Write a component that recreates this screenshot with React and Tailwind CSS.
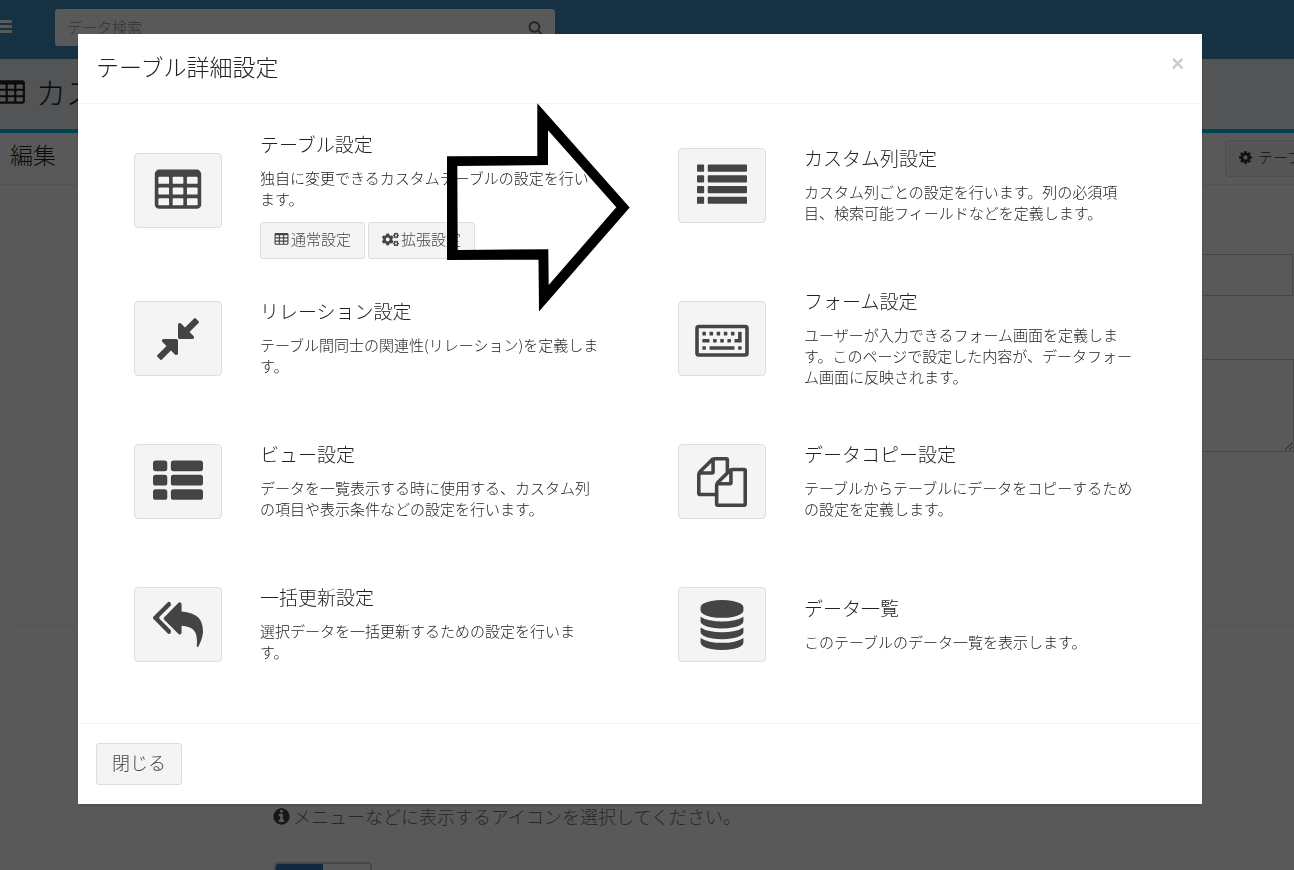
import React from "react";
import { FaCogs } from "react-icons/fa";

const PATHS = {
  compress:
    "M896 960v448q0 26-19 45t-45 19-45-19l-144-144-332 332q-10 10-23 10t-23-10l-114-114q-10-10-10-23t10-23l332-332-144-144q-19-19-19-45t19-45 45-19h448q26 0 45 19t19 45zm755-672q0 13-10 23l-332 332 144 144q19 19 19 45t-19 45-45 19h-448q-26 0-45-19t-19-45v-448q0-26 19-45t45-19 45 19l144 144 332-332q10-10 23-10t23 10l114 114q10 10 10 23z",
  copy: "M1696 384q40 0 68 28t28 68v1216q0 40-28 68t-68 28h-960q-40 0-68-28t-28-68v-288h-544q-40 0-68-28t-28-68v-672q0-40 20-88t48-76l408-408q28-28 76-48t88-20h416q40 0 68 28t28 68v328q68-40 128-40h416zm-544 213l-299 299h299v-299zm-640-384l-299 299h299v-299zm196 647l316-316v-416h-384v416q0 40-28 68t-68 28h-416v640h512v-256q0-40 20-88t48-76zm956 804v-1152h-384v416q0 40-28 68t-68 28h-416v640h896z",
  replyAll:
    "M640 1082v70q0 42-39 59-13 5-25 5-27 0-45-19l-512-512q-19-19-19-45t19-45l512-512q29-31 70-14 39 17 39 59v69l-397 398q-19 19-19 45t19 45zm1152 58q0 58-17 133.5t-38.5 138-48 125-40.5 90.5l-20 40q-8 17-28 17-6 0-9-1-25-8-23-34 43-400-106-565-64-71-170.5-110.5t-267.5-52.5v251q0 42-39 59-13 5-25 5-27 0-45-19l-512-512q-19-19-19-45t19-45l512-512q29-31 70-14 39 17 39 59v262q411 28 599 221 169 173 169 509z",
  database:
    "M896 768q237 0 443-43t325-127v170q0 69-103 128t-280 93.5-385 34.5-385-34.5-280-93.5-103-128v-170q119 84 325 127t443 43zm0 768q237 0 443-43t325-127v170q0 69-103 128t-280 93.5-385 34.5-385-34.5-280-93.5-103-128v-170q119 84 325 127t443 43zm0-384q237 0 443-43t325-127v170q0 69-103 128t-280 93.5-385 34.5-385-34.5-280-93.5-103-128v-170q119 84 325 127t443 43zm0-1152q208 0 385 34.5t280 93.5 103 128v128q0 69-103 128t-280 93.5-385 34.5-385-34.5-280-93.5-103-128v-128q0-69 103-128t280-93.5 385-34.5z",
  cog: "M1152 896q0-106-75-181t-181-75-181 75-75 181 75 181 181 75 181-75 75-181zm512-109v222q0 12-8 23t-20 13l-185 28q-19 54-39 91 35 50 107 138 10 12 10 25t-9 23q-27 37-99 108t-94 71q-12 0-26-9l-138-108q-44 23-91 38-16 136-29 186-7 28-36 28h-222q-14 0-24.5-8.5t-11.5-21.5l-28-184q-49-16-90-37l-141 107q-10 9-25 9-14 0-25-11-126-114-165-168-7-10-7-23 0-12 8-23 15-21 51-66.5t54-70.5q-27-50-41-99l-183-27q-13-2-21-12.5t-8-23.5v-222q0-12 8-23t19-13l186-28q14-46 39-92-40-57-107-138-10-12-10-24 0-10 9-23 26-36 98.5-107.5t94.5-71.5q13 0 26 10l138 107q44-23 91-38 16-136 29-186 7-28 36-28h222q14 0 24.5 8.5t11.5 21.5l28 184q49 16 90 37l142-107q9-9 24-9 13 0 25 10 129 119 165 170 7 8 7 22 0 12-8 23-15 21-51 66.5t-54 70.5q26 50 41 98l183 28q13 2 21 12.5t8 23.5z",
  info: "M1152 1376v-160q0-14-9-23t-23-9h-96v-512q0-14-9-23t-23-9h-320q-14 0-23 9t-9 23v160q0 14 9 23t23 9h96v320h-96q-14 0-23 9t-9 23v160q0 14 9 23t23 9h448q14 0 23-9t9-23zm-128-896v-160q0-14-9-23t-23-9h-192q-14 0-23 9t-9 23v160q0 14 9 23t23 9h192q14 0 23-9t9-23zm640 416q0 209-103 385.5t-279.5 279.5-385.5 103-385.5-103-279.5-279.5-103-385.5 103-385.5 279.5-279.5 385.5-103 385.5 103 279.5 279.5 103 385.5z",
  search:
    "M1216 832q0-185-131.5-316.5t-316.5-131.5-316.5 131.5-131.5 316.5 131.5 316.5 316.5 131.5 316.5-131.5 131.5-316.5zm512 832q0 52-38 90t-90 38q-54 0-90-38l-343-342q-179 124-399 124-143 0-273.5-55.5t-225-150-150-225-55.5-273.5 55.5-273.5 150-225 225-150 273.5-55.5 273.5 55.5 225 150 150 225 55.5 273.5q0 220-124 399l343 343q37 37 37 90z",
};

function Glyph({ name, className }) {
  return (
    <svg viewBox="0 0 1792 1792" fill="currentColor" className={className} aria-hidden="true">
      <path d={PATHS[name]} />
    </svg>
  );
}

const box = (x, y, w, h, r) =>
  `M${x + r} ${y}h${w - 2 * r}a${r} ${r} 0 0 1 ${r} ${r}v${h - 2 * r}a${r} ${r} 0 0 1 ${-r} ${r}h${2 * r - w}a${r} ${r} 0 0 1 ${-r} ${-r}v${2 * r - h}a${r} ${r} 0 0 1 ${r} ${-r}z`;

function TableGlyph({ className }) {
  let d = box(64, 128, 1664, 1408, 160);
  for (const y of [384, 768, 1152]) for (const x of [192, 704, 1216]) d += box(x, y, 384, 256, 32);
  return (
    <svg viewBox="0 0 1792 1792" fill="currentColor" fillRule="evenodd" className={className} aria-hidden="true">
      <path d={d} />
    </svg>
  );
}

function ListGlyph({ className }) {
  return (
    <svg viewBox="0 0 1792 1792" fill="currentColor" className={className} aria-hidden="true">
      <path d={[128, 512, 896, 1280].map((y) => box(0, y, 256, 256, 32) + box(384, y, 1408, 256, 32)).join("")} />
    </svg>
  );
}

function ThListGlyph({ className }) {
  return (
    <svg viewBox="0 0 1792 1792" fill="currentColor" className={className} aria-hidden="true">
      <path d={[128, 640, 1152].map((y) => box(0, y, 512, 384, 96) + box(640, y, 1152, 384, 96)).join("")} />
    </svg>
  );
}

function KeyboardGlyph() {
  const keys =
    [256, 512, 768, 1024, 1280].map((x) => box(x, 640, 128, 128, 16)).join("") +
    box(256, 896, 256, 128, 16) +
    [640, 896, 1152].map((x) => box(x, 896, 128, 128, 16)).join("") +
    box(256, 1152, 128, 128, 16) +
    box(512, 1152, 896, 128, 16) +
    box(1536, 1152, 128, 128, 16) +
    "M1552 640h96a16 16 0 0 1 16 16v352a16 16 0 0 1-16 16h-224a16 16 0 0 1-16-16v-96a16 16 0 0 1 16-16h112v-240a16 16 0 0 1 16-16z";
  return (
    <svg viewBox="0 0 1920 1792" fill="currentColor" className="h-[50px] w-[54px]" aria-hidden="true">
      <path fillRule="evenodd" d={box(0, 384, 1920, 1152, 128) + "M128 512h1664v896h-1664z"} />
      <path d={keys} />
    </svg>
  );
}

const BIG = "size-[50px]";

const ITEMS = [
  {
    title: "テーブル設定",
    text: "独自に変更できるカスタムテーブルの設定を行います。",
    icon: <TableGlyph className={BIG} />,
    iconClass: "mb-[10px]",
    buttons: true,
  },
  {
    title: "カスタム列設定",
    text: "カスタム列ごとの設定を行います。列の必須項目、検索可能フィールドなどを定義します。",
    icon: <ListGlyph className={BIG} />,
    cellClass: "pb-5",
  },
  {
    title: "リレーション設定",
    text: "テーブル間同士の関連性(リレーション)を定義します。",
    icon: <Glyph name="compress" className={BIG} />,
  },
  {
    title: "フォーム設定",
    text: "ユーザーが入力できるフォーム画面を定義します。このページで設定した内容が、データフォーム画面に反映されます。",
    icon: <KeyboardGlyph />,
  },
  {
    title: "ビュー設定",
    text: "データを一覧表示する時に使用する、カスタム列の項目や表示条件などの設定を行います。",
    icon: <ThListGlyph className={BIG} />,
  },
  {
    title: "データコピー設定",
    text: "テーブルからテーブルにデータをコピーするための設定を定義します。",
    icon: <Glyph name="copy" className={BIG} />,
  },
  {
    title: "一括更新設定",
    text: "選択データを一括更新するための設定を行います。",
    icon: <Glyph name="replyAll" className={BIG} />,
  },
  {
    title: "データ一覧",
    text: "このテーブルのデータ一覧を表示します。",
    icon: <Glyph name="database" className={BIG} />,
  },
];

const SMALL_BUTTON =
  "flex h-[37px] items-center gap-0.5 rounded-[3px] border border-[#ddd] bg-[#f4f4f4] px-[13px] pb-0.5 text-[15px] text-[#444]";

function SettingItem({ item }) {
  return (
    <section className={`flex items-center gap-[38px] px-[38px] ${item.cellClass || ""}`}>
      <a
        href="#"
        aria-label={item.title}
        className={`flex h-[75px] w-22 shrink-0 items-center justify-center rounded-[4px] border border-[#ddd] bg-[#f4f4f4] text-[#444] ${item.iconClass || ""}`}
      >
        {item.icon}
      </a>
      <div className={`min-w-0 flex-1 ${item.buttons ? "" : "pb-0.5"}`}>
        <h4 className="mb-[11px] text-[19px] leading-6">{item.title}</h4>
        <p className="text-[15px] leading-[21px]">{item.text}</p>
        {item.buttons && (
          <div className="mt-[13px] flex gap-[3px]">
            <a href="#" className={SMALL_BUTTON}>
              <TableGlyph className="size-[15px]" />
              通常設定
            </a>
            <a href="#" className={SMALL_BUTTON}>
              <FaCogs className="size-[17px]" />
              拡張設定
            </a>
          </div>
        )}
      </div>
    </section>
  );
}

function Page() {
  return (
    <div className="flex h-screen flex-col overflow-hidden bg-white">
      <header className="flex h-[59px] shrink-0 items-start bg-[#3c8dbc] pt-[9px]">
        <button type="button" aria-label="メニュー" className="flex h-9 w-[55px] items-center text-white">
          <svg viewBox="0 0 12 14" className="h-[14px] w-3" fill="currentColor" aria-hidden="true">
            <path d="M0 0h12v3h-12zM0 5h12v3h-12zM0 10h12v3h-12z" />
          </svg>
        </button>
        <form className="flex h-[37px] w-[500px] items-center rounded-[3px] bg-white px-3">
          <input
            type="text"
            aria-label="データ検索"
            placeholder="データ検索"
            className="min-w-0 flex-1 bg-transparent text-[15px] outline-none placeholder:text-[#999]"
          />
          <button type="button" aria-label="検索" className="text-[#777]">
            <Glyph name="search" className="size-[15px]" />
          </button>
        </form>
      </header>

      <div className="flex h-[70px] shrink-0 items-center gap-[10px] bg-[#ecf0f5] pb-1">
        <div className="flex w-[26px] shrink-0 justify-end overflow-hidden pt-0.5">
          <TableGlyph className="size-[30px] shrink-0" />
        </div>
        <h1 className="pb-0.5 text-[30px] leading-9">カスタムテーブル設定</h1>
      </div>

      <main className="border-t-4 border-[#00c0ef]">
        <div className="flex h-[52px] items-center justify-between overflow-hidden border-b border-[#eee]">
          <h3 className="pb-2 pl-[10px] text-[23px]">編集</h3>
          <button
            type="button"
            className="-mr-[66px] flex h-[37px] items-center gap-[5px] whitespace-nowrap rounded-[3px] border border-[#ddd] bg-[#f4f4f4] px-3 pb-0.5 text-[15px] text-[#333]"
          >
            <Glyph name="cog" className="size-[15px]" />
            テーブル設定
          </button>
        </div>
        <div className="flex flex-col pl-[274px] pt-[69px]">
          <input type="text" aria-label="テーブル名" className="mr-px h-[42px] border border-[#ccc]" />
          <textarea aria-label="説明" className="mt-[63px] h-[93px] resize-y border border-[#ccc]" />
        </div>
        <hr className="ml-[10px] mt-[173px] border-[#eee]" />
        <p className="mt-[177px] flex items-center gap-0.5 pl-[272px] text-[18px] leading-[27px] text-[#737373]">
          <Glyph name="info" className="size-[19px] text-[#444]" />
          メニューなどに表示するアイコンを選択してください。
        </p>
        <div className="ml-[274px] mt-8 flex h-10 w-[98px] overflow-hidden rounded-[4px] border-2 border-[#ccc]">
          <span className="flex-1 bg-[#337ab7]" />
          <span className="flex-1 bg-white" />
        </div>
      </main>
    </div>
  );
}

function Arrow() {
  return (
    <svg
      viewBox="447 103 184 210"
      className="pointer-events-none absolute left-[369px] top-[69px] h-[210px] w-[184px]"
      aria-hidden="true"
    >
      <path
        fillRule="evenodd"
        fill="#000"
        d="M537.300 103.300L629.700 207.500L539 311.500L538.500 259.700L447 260V156.300L537.300 156ZM548 130.300V165.100L457.300 165.900L457.700 250L548.300 249.300L548.700 285L616.300 207.300Z"
      />
    </svg>
  );
}

export default function App() {
  return (
    <div className="font-['Noto_Sans_CJK_JP',sans-serif] font-light text-[#222]">
      <Page />
      <div className="fixed inset-0 overflow-hidden bg-black/65 pr-[14px] pt-[34px]">
        <div
          role="dialog"
          aria-modal="true"
          aria-labelledby="dialog-title"
          className="relative mx-auto w-full max-w-[1124px] bg-white shadow-[0_2px_3px_rgba(0,0,0,0.125)]"
        >
          <div className="flex h-[70px] items-center justify-between border-b border-[#f4f4f4] px-[18px] pb-1.5">
            <h2 id="dialog-title" className="text-[23px] leading-8">
              テーブル詳細設定
            </h2>
            <button
              type="button"
              aria-label="閉じる"
              className="pb-1 font-['Liberation_Sans',sans-serif] text-[22px] font-bold leading-6 text-[#ccc]"
            >
              ×
            </button>
          </div>
          <div className="grid auto-rows-[143px] grid-cols-2 px-[18px] pb-[27px] pt-5">
            {ITEMS.map((item) => (
              <SettingItem key={item.title} item={item} />
            ))}
          </div>
          <div className="border-t border-[#f4f4f4] px-[18px] py-[19px]">
            <button
              type="button"
              className="h-[42px] rounded-[3px] border border-[#ddd] bg-[#f4f4f4] px-[15px] pb-1 text-[18px] text-[#444]"
            >
              閉じる
            </button>
          </div>
          <Arrow />
        </div>
      </div>
    </div>
  );
}
